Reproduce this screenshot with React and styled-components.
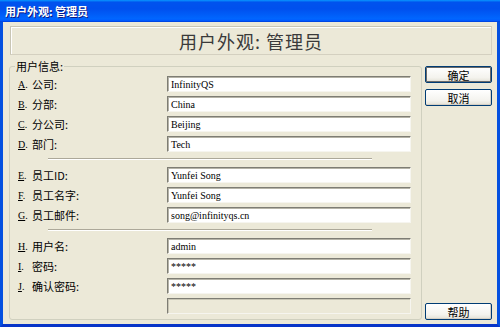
import React from 'react';
import styled, { createGlobalStyle } from 'styled-components';

const GlobalStyle = createGlobalStyle`
    html, body {
        margin : 0;
        padding : 0;
        background : #ECE9D8;
    }
    * {
        box-sizing : border-box;
    }
`

const CN = `"Noto Sans CJK SC", "Liberation Sans", sans-serif`;

const sections = [
    [
        { key: 'A', label: '公司:', value: 'InfinityQS' },
        { key: 'B', label: '分部:', value: 'China' },
        { key: 'C', label: '分公司:', value: 'Beijing' },
        { key: 'D', label: '部门:', value: 'Tech' },
    ],
    [
        { key: 'E', label: '员工ID:', value: 'Yunfei Song' },
        { key: 'F', label: '员工名字:', value: 'Yunfei Song' },
        { key: 'G', label: '员工邮件:', value: 'song@infinityqs.cn' },
    ],
    [
        { key: 'H', label: '用户名:', value: 'admin' },
        { key: 'I', label: '密码:', value: '*****' },
        { key: 'J', label: '确认密码:', value: '*****' },
        { disabled: true },
    ],
];

function App() {
  return (
    <Window>
        <GlobalStyle />
        <TitleBar>用户外观: 管理员</TitleBar>
        <Frame>
            <Header>用户外观: 管理员</Header>
            <Main>
                <Group>
                    <Legend>用户信息:</Legend>
                    {sections.map((rows, i) => (
                        <React.Fragment key={i}>
                            {i > 0 && <Separator />}
                            {rows.map((r, j) => (
                                <Row key={j}>
                                    <Label>
                                        {r.key && <Key><u>{r.key}</u>.</Key>}
                                        {r.label}
                                    </Label>
                                    <Field disabled={r.disabled}>{r.value}</Field>
                                </Row>
                            ))}
                        </React.Fragment>
                    ))}
                </Group>
                <Buttons>
                    <Button $default>确定</Button>
                    <Button>取消</Button>
                    <Spacer />
                    <Button>帮助</Button>
                </Buttons>
            </Main>
        </Frame>
    </Window>
  )
}

export default App;

const Window = styled.div`
    width : 500px;
    height : 327px;
    display : flex;
    flex-direction : column;
    overflow : hidden;
`

const TitleBar = styled.div`
    height : 22px;
    flex : none;
    padding : 0 5px;
    display : flex;
    align-items : center;
    color : white;
    font-family : ${CN};
    font-weight : 700;
    font-size : 11px;
    text-shadow : 1px 1px #0A1883;
    background : linear-gradient(#0997FF, #0053EE 10%, #0050EE 40%, #0066FF 85%, #005BFF 93%, #003DD7);
`

const Frame = styled.div`
    flex : 1;
    display : flex;
    flex-direction : column;
    background : #ECE9D8;
    border : 3px solid #0450E0;
    border-top : none;
    border-bottom-color : #0835C8;
    padding : 4px 5px 4px 3px;
`

const Header = styled.div`
    height : 29px;
    margin-left : 4px;
    display : flex;
    align-items : center;
    justify-content : center;
    border : 1px solid #D4D0C0;
    border-top-color : #C8C5B4;
    border-left-color : #C8C5B4;
    box-shadow : inset 1px 1px #FFFFFF;
    font-family : ${CN};
    font-size : 18px;
    color : #3A3A3A;
    letter-spacing : 1px;
`

const Main = styled.div`
    margin-top : 11px;
    flex : 1;
    display : flex;
    gap : 3px;
`

const Group = styled.div`
    position : relative;
    width : 414px;
    margin-left : 3px;
    border : 1px solid #D0D0BF;
    border-radius : 3px;
    padding : 7px 10px 3px 8px;
`

const Legend = styled.span`
    position : absolute;
    top : -8px;
    left : 5px;
    padding : 0 1px;
    background : #ECE9D8;
    font-family : ${CN};
    font-size : 11px;
    line-height : 14px;
    color : #000;
`

const Row = styled.div`
    height : 20px;
    display : flex;
    align-items : center;
`

const Label = styled.div`
    width : 149px;
    display : flex;
    align-items : center;
    font-family : ${CN};
    font-size : 11px;
    color : #000;
`

const Key = styled.span`
    width : 14px;
    font-family : "Liberation Serif", serif;
    font-size : 10px;
`

const Field = styled.div`
    width : 244px;
    height : 16px;
    display : flex;
    align-items : center;
    padding-left : 3px;
    background : ${props => props.disabled ? '#ECE9D8' : '#FFFFFF'};
    border : 1px solid;
    border-color : #7E7D74 #F6F5EF #F6F5EF #7E7D74;
    box-shadow : ${props => props.disabled ? 'inset 1px 1px #C8C5B4' : 'inset 1px 1px #B5B3A7'};
    font-family : "Liberation Serif", serif;
    font-size : 10px;
    color : #000;
    white-space : pre;
`

const Separator = styled.div`
    margin : 4px 0 5px 30px;
    width : 324px;
    height : 2px;
    border-top : 1px solid #ACA899;
    border-bottom : 1px solid #FFFFFF;
`

const Buttons = styled.div`
    display : flex;
    flex-direction : column;
    gap : 6px;
    width : 68px;
`

const Spacer = styled.div`
    flex : 1;
`

const Button = styled.div`
    height : 17px;
    display : flex;
    align-items : center;
    justify-content : center;
    border : 1px solid #003C74;
    border-radius : 2px;
    background : linear-gradient(#FFFFFF, #F4F3EE 70%, #E3E1D6);
    box-shadow : ${props => props.$default ? 'inset 0 0 0 1px #6A6A6A' : 'inset -1px -1px #D6D0C5'};
    font-family : ${CN};
    font-size : 11px;
    color : #000;
`
